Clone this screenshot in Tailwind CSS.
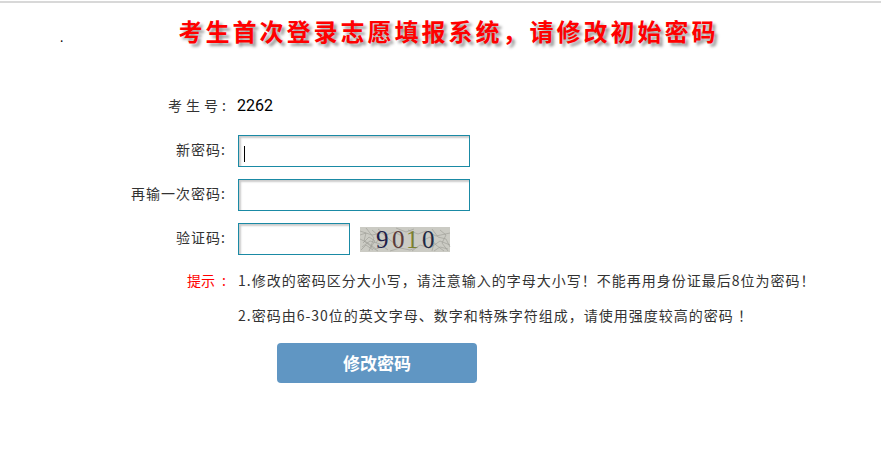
<!DOCTYPE html>
<html lang="zh-CN">
<head>
    <meta charset="UTF-8">
    <title>修改初始密码</title>
    <script src="https://cdn.jsdelivr.net/npm/@tailwindcss/browser@4"></script>
</head>
<body class="bg-white overflow-hidden font-['Noto_Sans_CJK_SC','Noto_Sans',sans-serif] text-[#333]">
    <div class="h-[461px] border-t-2 border-[#d8d8d8] mt-px">
        <div class="flex h-[91px]">
            <span class="w-[64px] pl-[60px] pt-[27px] text-[12px] leading-[14px] text-black">.</span>
            <h1 class="flex-1 pr-[48px] pt-[10px] text-center text-[24px] leading-[36px] font-bold tracking-[3px] text-[#ff0000] [text-shadow:3px_3px_3px_#999]">考生首次登录志愿填报系统，请修改初始密码</h1>
        </div>

        <!-- form rows -->
        <div class="flex items-center h-[24px]">
            <label class="w-[226px] text-right text-[14px] pb-[1px]"><span class="tracking-[4px]">考生号</span>:</label>
            <span class="ml-[11px] text-[16px] text-black font-['Roboto']">2262</span>
        </div>
        <div class="flex items-center mt-[17px] h-[32px]">
            <label class="w-[226px] text-right text-[14px] tracking-[1px] pb-[3px]">新密码:</label>
            <div class="relative ml-[12px]">
                <input type="password" class="block w-[232px] h-[32px] border border-[#1a8aa5] shadow-[inset_2px_2px_2px_#ccc] outline-none">
                <span class="absolute left-[6px] top-[11px] w-px h-[16px] bg-black"></span>
            </div>
        </div>
        <div class="flex items-center mt-[12px] h-[32px]">
            <label class="w-[226px] text-right text-[14px] tracking-[1px] pb-[3px]">再输一次密码:</label>
            <input type="password" class="ml-[12px] block w-[232px] h-[32px] border border-[#1a8aa5] shadow-[inset_2px_2px_2px_#ccc] outline-none">
        </div>
        <div class="flex items-center mt-[12px] h-[32px]">
            <label class="w-[226px] text-right text-[14px] tracking-[1px] pb-[3px]">验证码:</label>
            <input type="text" class="ml-[12px] block w-[112px] h-[32px] border border-[#1a8aa5] shadow-[inset_2px_2px_2px_#ccc] outline-none">
            <svg class="ml-[10px] overflow-visible" width="90" height="25" viewBox="0 0 90 25">
                <rect width="90" height="25" fill="#cbcbc4"/>
                <g fill="none" stroke="#9a9a93" stroke-width="0.6">
                    <path d="M0 4 L12 8 L22 6 L30 13 L38 19"/>
                    <path d="M2 20 L10 14 L20 17 L28 23"/>
                    <path d="M6 1 L14 11 L9 24"/>
                    <path d="M18 2 L26 8 L34 5 L44 10"/>
                    <path d="M0 12 L8 16 L16 22 L24 19"/>
                    <path d="M48 3 L58 7 L66 4 L76 9 L90 6"/>
                    <path d="M52 24 L60 18 L70 21 L80 14 L90 18"/>
                    <path d="M72 2 L78 10 L86 12 L90 20"/>
                    <path d="M62 14 L70 10 L76 18 L84 24"/>
                    <path d="M30 24 L40 21 L50 23 L58 20"/>
                    <path d="M0 8 L6 6 L4 14 L12 20"/>
                    <path d="M74 24 L80 20 L88 22"/>
                    <path d="M3 16 L9 10 L15 14 L11 20 L18 24"/>
                    <path d="M1 23 L6 18 L13 23"/>
                    <path d="M12 3 L20 10 L16 16"/>
                    <path d="M36 1 L46 5 L54 2"/>
                    <path d="M80 3 L86 8 L82 16 L88 24"/>
                    <path d="M68 22 L74 16 L72 24"/>
                </g>
                <g font-family="'Liberation Serif',serif" font-size="25">
                    <text x="16" y="21" fill="#1f1f4a">9</text>
                    <text x="32" y="21" fill="#5a3a3a">0</text>
                    <text x="46" y="21" fill="#7a8030">1</text>
                    <text x="62" y="21" fill="#1f2a44">0</text>
                </g>
            </svg>
        </div>

        <div class="flex mt-[14px] h-[24px] items-center">
            <label class="w-[226px] text-right text-[14px] text-[#ff0000] pb-[2px]">提示<span class="ml-[7px]">:</span></label>
            <span class="ml-[12px] text-[14px] tracking-[1px] pb-[2px]">1.修改的密码区分大小写，请注意输入的字母大小写！不能再用身份证最后8位为密码！</span>
        </div>
        <div class="flex mt-[11px] h-[24px] items-center">
            <span class="ml-[238px] text-[14px] tracking-[1px] pb-[2px]">2.密码由6-30位的英文字母、数字和特殊字符组成，请使用强度较高的密码 ！</span>
        </div>
        <button class="block ml-[277px] mt-[15px] w-[200px] h-[40px] rounded-[4px] bg-[#6096c3] text-white text-[17px] font-bold">修改密码</button>
    </div>
</body>
</html>
